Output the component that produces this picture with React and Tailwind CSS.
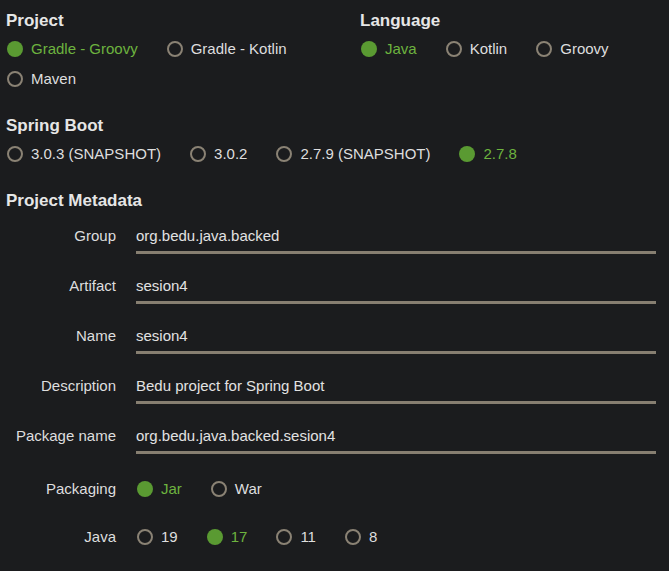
import React from 'react';

const Radio = ({ label, checked }) => (
  <div className="flex items-center mr-[29px] h-[30px]">
    {checked ? (
      <span className="w-4 h-4 rounded-full bg-[#5a9a32]" />
    ) : (
      <span className="w-4 h-4 rounded-full border-2 border-[#8a8274]" />
    )}
    <span className={`ml-2 ${checked ? 'text-[#6db33f]' : 'text-[#dedede]'}`}>{label}</span>
  </div>
);

const RadioGroup = ({ options, value }) => (
  <div className="flex flex-wrap pl-px">
    {options.map((o) => (
      <Radio key={o} label={o} checked={o === value} />
    ))}
  </div>
);

const Heading = ({ children }) => (
  <h2 className="text-[17px] font-bold leading-6 h-6 text-[#e6e6e6] mb-px">{children}</h2>
);

const InputRow = ({ label, value }) => (
  <div className="flex h-[50px]">
    <div className="w-[110px] text-right leading-[30px] text-[#dedede]">{label}</div>
    <div className="ml-5 w-[520px] h-[33px] border-b-[3px] border-[#877f71] leading-[30px] text-[#e2e2e2]">
      {value}
    </div>
  </div>
);

const RadioRow = ({ label, options, value, className }) => (
  <div className={`flex items-center h-[36px] ${className || ''}`}>
    <div className="w-[110px] text-right text-[#dedede]">{label}</div>
    <div className="ml-5">
      <RadioGroup options={options} value={value} />
    </div>
  </div>
);

export default function App() {
  return (
    <div
      className="w-[669px] h-[571px] overflow-hidden bg-[#1b1c1e] pt-[9px] px-1.5 text-[15px] text-[#dedede]"
      style={{ fontFamily: '"Liberation Sans", Arial, sans-serif' }}
    >
      {/* Project / Language */}
      <div className="flex mb-5">
        <div className="w-[354px]">
          <Heading>Project</Heading>
          <RadioGroup
            options={['Gradle - Groovy', 'Gradle - Kotlin', 'Maven']}
            value="Gradle - Groovy"
          />
        </div>
        <div className="flex-1">
          <Heading>Language</Heading>
          <RadioGroup options={['Java', 'Kotlin', 'Groovy']} value="Java" />
        </div>
      </div>

      {/* Spring Boot */}
      <div className="mb-5">
        <Heading>Spring Boot</Heading>
        <RadioGroup
          options={['3.0.3 (SNAPSHOT)', '3.0.2', '2.7.9 (SNAPSHOT)', '2.7.8']}
          value="2.7.8"
        />
      </div>

      {/* Project Metadata */}
      <div>
        <h2 className="text-[17px] font-bold leading-6 h-6 text-[#e6e6e6] mb-2">Project Metadata</h2>
        <InputRow label="Group" value="org.bedu.java.backed" />
        <InputRow label="Artifact" value="sesion4" />
        <InputRow label="Name" value="sesion4" />
        <InputRow label="Description" value="Bedu project for Spring Boot" />
        <InputRow label="Package name" value="org.bedu.java.backed.sesion4" />
        <RadioRow label="Packaging" options={['Jar', 'War']} value="Jar" />
        <RadioRow label="Java" options={['19', '17', '11', '8']} value="17" className="mt-3" />
      </div>
    </div>
  );
}
